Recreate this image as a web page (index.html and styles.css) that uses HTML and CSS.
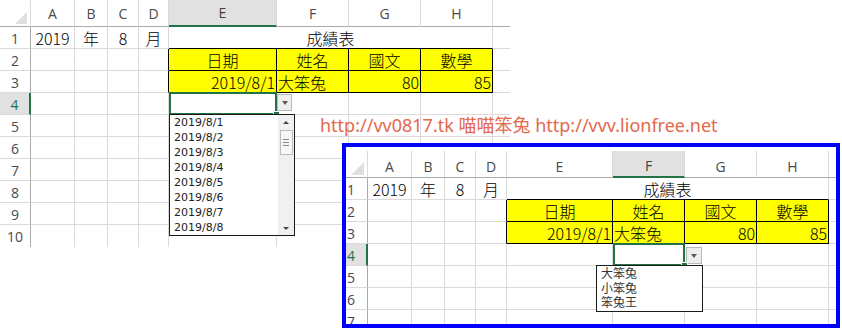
FILE: index.html
```html
<!DOCTYPE html>
<html lang="zh-Hant">
<head>
<meta charset="utf-8">
<title>成績表</title>
<link rel="stylesheet" href="styles.css">
</head>
<body>
<div class="canvas">
  <div class="sheet sheet-main">
    <div class="hd corner"><svg class="tri" width="12" height="12" viewBox="0 0 12 12"><path d="M12 0 L12 12 L0 12 Z" fill="#dfdfdf"/></svg></div>
    <div class="hd">A</div><div class="hd">B</div><div class="hd">C</div><div class="hd">D</div>
    <div class="hd sel-col">E</div><div class="hd">F</div><div class="hd">G</div><div class="hd">H</div><div class="hd extra"></div>

    <div class="hd rowh">1</div>
    <div class="c ctr">2019</div><div class="c ctr">年</div><div class="c ctr">8</div><div class="c ctr">月</div>
    <div class="c ctr merged">成績表</div><div class="c extra"></div>

    <div class="hd rowh">2</div>
    <div class="c"></div><div class="c"></div><div class="c"></div><div class="c edge-r"></div>
    <div class="c yel ctr">日期</div><div class="c yel ctr">姓名</div><div class="c yel ctr">國文</div><div class="c yel ctr">數學</div><div class="c extra"></div>

    <div class="hd rowh">3</div>
    <div class="c"></div><div class="c"></div><div class="c"></div><div class="c edge-r"></div>
    <div class="c yel rt">2019/8/1</div><div class="c yel">大笨兔</div><div class="c yel rt">80</div><div class="c yel rt">85</div><div class="c extra"></div>

    <div class="hd rowh sel-row">4</div>
    <div class="c"></div><div class="c"></div><div class="c"></div><div class="c"></div>
    <div class="c active">
      <span class="dd-btn"></span>
      <div class="dd-list">
        <div class="dd-items">
          <div>2019/8/1</div><div>2019/8/2</div><div>2019/8/3</div><div>2019/8/4</div>
          <div>2019/8/5</div><div>2019/8/6</div><div>2019/8/7</div><div>2019/8/8</div>
        </div>
        <div class="sb">
          <span class="sb-btn"><span class="arr-up"></span></span>
          <span class="sb-thumb"><i></i><i></i><i></i></span>
          <span class="sb-fill"></span>
          <span class="sb-btn"><span class="arr-down"></span></span>
        </div>
      </div>
    </div>
    <div class="c"></div><div class="c"></div><div class="c"></div><div class="c extra"></div>

    <div class="hd rowh">5</div><div class="c"></div><div class="c"></div><div class="c"></div><div class="c"></div><div class="c"></div><div class="c"></div><div class="c"></div><div class="c"></div><div class="c extra"></div>
    <div class="hd rowh">6</div><div class="c"></div><div class="c"></div><div class="c"></div><div class="c"></div><div class="c"></div><div class="c"></div><div class="c"></div><div class="c"></div><div class="c extra"></div>
    <div class="hd rowh">7</div><div class="c"></div><div class="c"></div><div class="c"></div><div class="c"></div><div class="c"></div><div class="c"></div><div class="c"></div><div class="c"></div><div class="c extra"></div>
    <div class="hd rowh">8</div><div class="c"></div><div class="c"></div><div class="c"></div><div class="c"></div><div class="c"></div><div class="c"></div><div class="c"></div><div class="c"></div><div class="c extra"></div>
    <div class="hd rowh">9</div><div class="c"></div><div class="c"></div><div class="c"></div><div class="c"></div><div class="c"></div><div class="c"></div><div class="c"></div><div class="c"></div><div class="c extra"></div>
    <div class="hd rowh last">10</div><div class="c last"></div><div class="c last"></div><div class="c last"></div><div class="c last"></div><div class="c last"></div><div class="c last"></div><div class="c last"></div><div class="c last"></div><div class="c extra last"></div>
  </div>

  <div class="watermark">http://vv0817.tk 喵喵笨兔 http://vvv.lionfree.net</div>

  <div class="shot">
    <div class="sheet sheet-inner">
      <div class="hd corner"><svg class="tri" width="13" height="13" viewBox="0 0 13 13"><path d="M13 0 L13 13 L0 13 Z" fill="#dfdfdf"/></svg></div>
      <div class="hd">A</div><div class="hd">B</div><div class="hd">C</div><div class="hd">D</div>
      <div class="hd">E</div><div class="hd sel-col">F</div><div class="hd">G</div><div class="hd">H</div><div class="hd extra"></div>

      <div class="hd rowh">1</div>
      <div class="c ctr">2019</div><div class="c ctr">年</div><div class="c ctr">8</div><div class="c ctr">月</div>
      <div class="c ctr merged">成績表</div><div class="c extra"></div>

      <div class="hd rowh">2</div>
      <div class="c"></div><div class="c"></div><div class="c"></div><div class="c edge-r"></div>
      <div class="c yel ctr">日期</div><div class="c yel ctr">姓名</div><div class="c yel ctr">國文</div><div class="c yel ctr">數學</div><div class="c extra"></div>

      <div class="hd rowh">3</div>
      <div class="c"></div><div class="c"></div><div class="c"></div><div class="c edge-r"></div>
      <div class="c yel rt">2019/8/1</div><div class="c yel">大笨兔</div><div class="c yel rt">80</div><div class="c yel rt">85</div><div class="c extra"></div>

      <div class="hd rowh sel-row">4</div>
      <div class="c"></div><div class="c"></div><div class="c"></div><div class="c"></div><div class="c"></div>
      <div class="c active">
        <span class="dd-btn"></span>
        <div class="dd-list">
          <div class="dd-items">
            <div>大笨兔</div><div>小笨兔</div><div>笨兔王</div>
          </div>
        </div>
      </div>
      <div class="c"></div><div class="c"></div><div class="c extra"></div>

      <div class="hd rowh">5</div><div class="c"></div><div class="c"></div><div class="c"></div><div class="c"></div><div class="c"></div><div class="c"></div><div class="c"></div><div class="c"></div><div class="c extra"></div>
      <div class="hd rowh">6</div><div class="c"></div><div class="c"></div><div class="c"></div><div class="c"></div><div class="c"></div><div class="c"></div><div class="c"></div><div class="c"></div><div class="c extra"></div>
      <div class="hd rowh">7</div><div class="c"></div><div class="c"></div><div class="c"></div><div class="c"></div><div class="c"></div><div class="c"></div><div class="c"></div><div class="c"></div><div class="c extra"></div>
    </div>
  </div>
</div>
</body>
</html>
```
FILE: styles.css
```css
html, body {
  margin: 0;
  padding: 0;
  background: #ffffff;
}

.canvas {
  position: relative;
  width: 842px;
  height: 328px;
  overflow: hidden;
  background: #ffffff;
  font-family: "Noto Sans CJK TC", "Noto Sans", sans-serif;
}

.sheet {
  display: grid;
}

.sheet-main {
  grid-template-columns: 31px 44px 33px 31px 30px 108px 72px 72px 72px 17px;
  grid-template-rows: 27px repeat(10, 22px);
  width: 510px;
}

.sheet-inner {
  grid-template-columns: 22px 44px 33px 31px 31px 106px 72px 72px 72px 7px;
  grid-template-rows: 27px repeat(7, 22px);
  margin-top: 4px;
}

/* headers */
.hd {
  box-sizing: border-box;
  display: flex;
  align-items: center;
  justify-content: center;
  border-right: 1px solid #dadada;
  border-bottom: 1px solid #ababab;
  font-family: "Open Sans", "Liberation Sans", sans-serif;
  font-size: 14px;
  color: #4a4a4a;
  background: #ffffff;
}

.hd.extra {
  border-right: 0;
}

.hd.corner {
  align-items: flex-end;
  justify-content: flex-end;
  padding: 0 3px 2px 0;
}

.tri {
  display: block;
}

.hd.rowh {
  border-right: 1px solid #ababab;
  border-bottom: 1px solid #dadada;
  padding-top: 1px;
}

.sheet-inner .hd.rowh {
  justify-content: flex-start;
  padding-left: 1px;
}

.sheet-inner .hd:not(.rowh) {
  padding-top: 4px;
}

.hd.sel-col {
  background: #e1e1e1;
  border-bottom: 2px solid #217346;
  color: #3f3f3f;
}

.hd.sel-row {
  background: #e1e1e1;
  border-right: 2px solid #217346;
  color: #217346;
}

.hd.last,
.c.last {
  border-bottom: 0;
}

/* cells */
.c {
  box-sizing: border-box;
  border-right: 1px solid #dadada;
  border-bottom: 1px solid #dadada;
  font-size: 16px;
  line-height: 22px;
  font-weight: 300;
  color: #000000;
  white-space: nowrap;
  padding: 0 1px;
}

.c.extra {
  border-right: 0;
}

.ctr { text-align: center; }
.rt { text-align: right; }

.merged {
  grid-column: span 4;
  border-right: 1px solid #dadada;
  border-bottom: 1px solid #000000;
}

.edge-r {
  border-right: 1px solid #000000;
}

.yel {
  background: #ffff00;
  border-right: 1px solid #000000;
  border-bottom: 1px solid #000000;
}

/* active cell with data-validation list */
.active {
  position: relative;
  z-index: 2;
}

.active::after {
  content: "";
  position: absolute;
  left: 0;
  top: -1px;
  right: -1px;
  bottom: -1px;
  border: 2px solid #217346;
  pointer-events: none;
}

.active::before {
  content: "";
  position: absolute;
  right: -4px;
  bottom: -4px;
  width: 5px;
  height: 5px;
  background: #217346;
  border: 1px solid #ffffff;
  z-index: 1;
}

.dd-btn {
  position: absolute;
  left: calc(100% + 1px);
  top: 1px;
  width: 15px;
  height: 17px;
  box-sizing: border-box;
  border: 1px solid #b9b9b9;
  background: #eeeeee;
  display: flex;
  align-items: center;
  justify-content: center;
}

.dd-btn::before {
  content: "";
  border-left: 3.5px solid transparent;
  border-right: 3.5px solid transparent;
  border-top: 4px solid #5a5a5a;
}

.dd-list {
  position: absolute;
  top: 100%;
  left: 0;
  width: 126px;
  height: 122px;
  box-sizing: border-box;
  border: 1px solid #1a1a1a;
  background: #ffffff;
  z-index: 3;
  display: flex;
}

.dd-items {
  flex: 1;
  padding: 0 0 0 4px;
  font-family: "DejaVu Sans", "Noto Sans", sans-serif;
  font-size: 11px;
  line-height: 15px;
  font-weight: 400;
  color: #222222;
}

.sb {
  width: 16px;
  background: #f0f0f0;
  display: flex;
  flex-direction: column;
  align-items: center;
}

.sb-btn {
  height: 14px;
  width: 16px;
  display: flex;
  align-items: center;
  justify-content: center;
}

.arr-up {
  border-left: 3px solid transparent;
  border-right: 3px solid transparent;
  border-bottom: 3px solid #444444;
}

.arr-down {
  border-left: 3px solid transparent;
  border-right: 3px solid transparent;
  border-top: 3px solid #444444;
}

.sb-thumb {
  margin-top: 1px;
  width: 13px;
  height: 25px;
  box-sizing: border-box;
  border: 1px solid #bcbcbc;
  background: #f7f7f7;
  display: flex;
  flex-direction: column;
  align-items: center;
  justify-content: center;
  gap: 2px;
}

.sb-thumb i {
  display: block;
  width: 6px;
  height: 1px;
  background: #8a8a8a;
}

.sb-fill {
  flex: 1;
}

/* inner (screenshot) variant */
.sheet-inner .dd-btn {
  left: calc(100% + 2px);
  top: 3px;
  width: 16px;
  height: 17px;
}

.sheet-inner .dd-list {
  left: -17px;
  width: 107px;
  height: 47px;
}

.sheet-inner .dd-items {
  padding: 0 0 0 4px;
  font-family: "Noto Sans CJK TC", sans-serif;
  font-size: 12px;
  line-height: 14.5px;
  color: #333333;
}

/* overlays */
.watermark {
  position: absolute;
  left: 320px;
  top: 113px;
  z-index: 4;
  font-family: "Noto Sans", "Noto Sans CJK TC", sans-serif;
  font-size: 18px;
  line-height: 24px;
  color: #e4684c;
  white-space: nowrap;
}

.shot {
  position: absolute;
  left: 342px;
  top: 143px;
  width: 498px;
  height: 185px;
  box-sizing: border-box;
  border: 4px solid #0000ff;
  background: #ffffff;
  overflow: hidden;
  z-index: 5;
}
```
